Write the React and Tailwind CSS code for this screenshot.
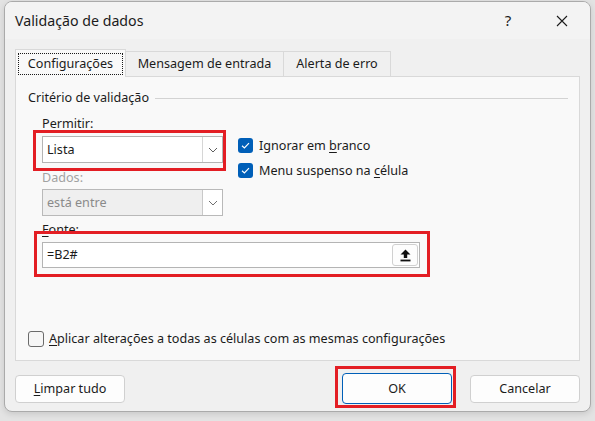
import React from "react";

const font = { fontFamily: '"Noto Sans", "Open Sans", sans-serif' };

function Chevron({ color = "#5f5f5f" }) {
  return (
    <svg width="10" height="6" viewBox="0 0 10 6" fill="none">
      <path d="M1 1 L5 5 L9 1" stroke={color} strokeWidth="1" />
    </svg>
  );
}

function Check() {
  return (
    <svg width="11" height="11" viewBox="0 0 11 11" fill="none">
      <path d="M2 5.8 L4.4 8 L9 3.2" stroke="white" strokeWidth="1.2" />
    </svg>
  );
}

function CheckedBox() {
  return (
    <div className="w-[15px] h-[15px] rounded-[3px] bg-[#005fb8] flex items-center justify-center shrink-0">
      <Check />
    </div>
  );
}

function U({ children }) {
  return <span className="underline underline-offset-[1.5px] decoration-1">{children}</span>;
}

export default function App() {
  return (
    <div
      className="relative w-[595px] h-[421px] bg-[#e3e3e3] pt-[1px] pl-[4px] overflow-hidden text-[12.6px] text-[#1b1b1b]"
      style={font}
    >
      <div className="w-[587px] h-[411px] rounded-[8px] border border-[#aaaaaa] bg-[#f0f0f0] flex flex-col overflow-hidden shadow-[0_2px_6px_rgba(0,0,0,0.12)]">
        {/* Title bar */}
        <div className="h-[37px] shrink-0 bg-[#f3f3f3] flex items-center pl-[10px]">
          <div className="text-[14.2px] leading-[20px] flex-1">Validação de dados</div>
          <div className="text-[15px] w-[20px] text-center mr-[38px]">?</div>
          <svg width="12" height="12" viewBox="0 0 12 12" className="mr-[22px]">
            <path d="M1 1 L11 11 M11 1 L1 11" stroke="#1b1b1b" strokeWidth="1.1" />
          </svg>
        </div>

        {/* Body */}
        <div className="flex flex-col px-[10px] pt-[10px]">
          {/* Tabs */}
          <div className="flex items-end h-[27px] relative z-10">
            <div className="w-[111px] h-[28px] border border-b-0 border-[#d9d9d9] bg-[#f9f9f9] pt-[3px] px-[2px] -mb-px">
              <div className="h-[22px] border border-dotted border-[#1b1b1b] flex items-center justify-center leading-[18px]">
                Configurações
              </div>
            </div>
            <div className="w-[158px] h-[25px] border border-l-0 border-b-0 border-[#d9d9d9] bg-[#f0f0f0] flex items-center justify-center leading-[18px]">
              Mensagem de entrada
            </div>
            <div className="w-[107px] h-[25px] border border-l-0 border-b-0 border-[#d9d9d9] bg-[#f0f0f0] flex items-center justify-center leading-[18px]">
              Alerta de erro
            </div>
          </div>

          {/* Panel */}
          <div className="w-[565px] h-[285px] border border-[#d9d9d9] bg-[#f9f9f9] flex flex-col">
            <div className="flex items-center mt-[12px] pl-[12px] pr-[11px] h-[18px]">
              <span className="leading-[18px]">Critério de validação</span>
              <div className="flex-1 h-px bg-[#d3d3d3] ml-[6px]" />
            </div>

            <div className="flex pl-[26px] mt-[8px]">
              <div className="flex flex-col w-[181px]">
                <div className="leading-[18px]">
                  <U>P</U>ermitir:
                </div>
                <div className="mt-[3px] h-[27px] border border-[#b4b4b4] bg-white flex items-center">
                  <span className="flex-1 pl-[4px] leading-[18px]">Lista</span>
                  <div className="w-[20px] h-full border-l border-[#d6d6d6] flex items-center justify-center">
                    <Chevron />
                  </div>
                </div>
                <div className="mt-[6px] leading-[18px] text-[#a2a2a2]">Dados:</div>
                <div className="mt-[2px] h-[27px] border border-[#b9b9b9] bg-[#efefef] flex items-center">
                  <span className="flex-1 pl-[4px] leading-[18px] text-[#8a8a8a]">está entre</span>
                  <div className="w-[20px] h-[25px] border-l border-[#c9c9c9] bg-white flex items-center justify-center">
                    <Chevron color="#707070" />
                  </div>
                </div>
              </div>
              <div className="flex flex-col ml-[15px] mt-[23px] gap-[10px]">
                <div className="flex items-center gap-[6px] h-[15px]">
                  <CheckedBox />
                  <span className="leading-[18px]">
                    Ignorar em <U>b</U>ranco
                  </span>
                </div>
                <div className="flex items-center gap-[6px] h-[15px]">
                  <CheckedBox />
                  <span className="leading-[18px]">
                    Menu suspenso na <U>c</U>élula
                  </span>
                </div>
              </div>
            </div>

            <div className="pl-[26px] mt-[5px] leading-[18px]">
              <U>F</U>onte:
            </div>
            <div className="ml-[26px] mt-[3px] w-[378px] h-[26px] border border-[#b4b4b4] bg-white flex items-center">
              <span className="flex-1 pl-[4px] leading-[18px]">=B2#</span>
              <div className="w-[26px] h-[22px] mr-px rounded-[3px] border border-[#d0d0d0] bg-[#fdfdfd] flex items-center justify-center">
                <svg width="11" height="13" viewBox="0 0 11 13">
                  <path d="M5.5 0.5 L10.5 5.5 L7.2 5.5 L7.2 9 L3.8 9 L3.8 5.5 L0.5 5.5 Z" fill="#111" />
                  <rect x="0.5" y="10.6" width="10" height="1.8" fill="#111" />
                </svg>
              </div>
            </div>

            <div className="flex items-center pl-[12px] mt-[62px] h-[18px]">
              <div className="w-[16px] h-[16px] rounded-[3px] border border-[#6b6b6b] bg-[#f6f6f6] shrink-0" />
              <span className="ml-[5px] leading-[18px]">
                <U>A</U>plicar alterações a todas as células com as mesmas configurações
              </span>
            </div>
          </div>

          {/* Buttons */}
          <div className="flex items-center mt-[12px] h-[31px]">
            <div className="w-[110px] h-[28px] rounded-[4px] border border-[#d0d0d0] bg-[#fdfdfd] flex items-center justify-center leading-[18px]">
              <span>
                <U>L</U>impar tudo
              </span>
            </div>
            <div className="flex-1" />
            <div className="w-[110px] h-[31px] rounded-[4px] border border-[#005fb8] bg-[#fdfdfd] flex items-center justify-center leading-[18px]">
              OK
            </div>
            <div className="w-[110px] h-[28px] ml-[18px] rounded-[4px] border border-[#d0d0d0] bg-[#fdfdfd] flex items-center justify-center leading-[18px]">
              Cancelar
            </div>
          </div>
        </div>
      </div>

      {/* Red annotation boxes */}
      <div className="absolute left-[33px] top-[130px] w-[193px] h-[41px] border-[3px] border-[#e31e24]" />
      <div className="absolute left-[34px] top-[231px] w-[396px] h-[46px] border-[3px] border-[#e31e24]" />
      <div className="absolute left-[335px] top-[366px] w-[121px] h-[42px] border-[3px] border-[#e31e24]" />
    </div>
  );
}
